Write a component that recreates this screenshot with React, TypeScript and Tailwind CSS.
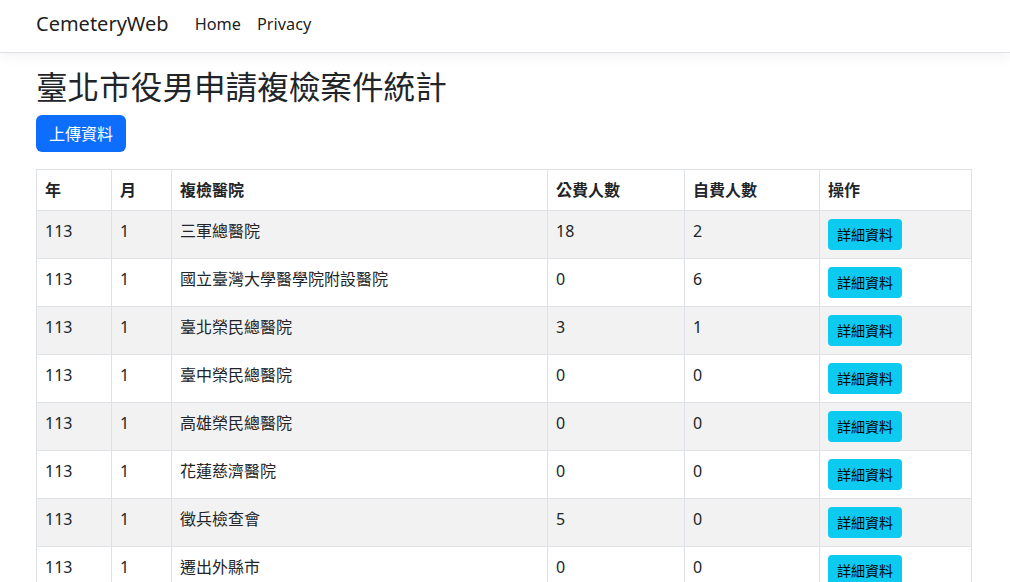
import React from 'react';

type Row = {
  year: number;
  month: number;
  hospital: string;
  publicCount: number;
  selfCount: number;
};

const rows: Row[] = [
  { year: 113, month: 1, hospital: '三軍總醫院', publicCount: 18, selfCount: 2 },
  { year: 113, month: 1, hospital: '國立臺灣大學醫學院附設醫院', publicCount: 0, selfCount: 6 },
  { year: 113, month: 1, hospital: '臺北榮民總醫院', publicCount: 3, selfCount: 1 },
  { year: 113, month: 1, hospital: '臺中榮民總醫院', publicCount: 0, selfCount: 0 },
  { year: 113, month: 1, hospital: '高雄榮民總醫院', publicCount: 0, selfCount: 0 },
  { year: 113, month: 1, hospital: '花蓮慈濟醫院', publicCount: 0, selfCount: 0 },
  { year: 113, month: 1, hospital: '徵兵檢查會', publicCount: 5, selfCount: 0 },
  { year: 113, month: 1, hospital: '遷出外縣市', publicCount: 0, selfCount: 0 },
];

const font = "font-['Segoe_UI','Noto_Sans','Noto_Sans_CJK_TC',sans-serif]";

export default function App() {
  return (
    <div className={`min-h-screen bg-white text-[#212529] ${font}`}>
      {/* Navbar */}
      <nav className="h-[53px] border-b border-[#dee2e6] bg-white shadow-[0_4px_12px_rgba(0,0,0,0.05)]">
        <div className="mx-auto flex h-full w-[960px] items-center pr-3 pl-[11px] pb-[4px]">
          <a className="mr-[18px] text-[20px] leading-[30px] text-black/90">CemeteryWeb</a>
          <a className="px-2 text-[16.3px] leading-6 text-black/90">Home</a>
          <a className="px-2 text-[16.3px] leading-6 text-black/90">Privacy</a>
        </div>
      </nav>

      {/* Content */}
      <main className="mx-auto w-[960px] pr-3 pl-[11px] pt-[15px]">
        <h2 className="mb-[9px] text-[31.6px] leading-[38px] font-normal">臺北市役男申請複檢案件統計</h2>
        <button className="h-[37px] rounded-md bg-[#0d6efd] px-[13px] text-[16px] text-white">上傳資料</button>

        <table className="mt-[17px] w-[936px] border-collapse text-[16px] leading-6">
          <thead>
            <tr>
              <th className="w-[75px] border border-[#dee2e6] p-2 text-left font-bold">年</th>
              <th className="w-[60px] border border-[#dee2e6] p-2 text-left font-bold">月</th>
              <th className="w-[376px] border border-[#dee2e6] p-2 text-left font-bold">複檢醫院</th>
              <th className="w-[137px] border border-[#dee2e6] p-2 text-left font-bold">公費人數</th>
              <th className="w-[135px] border border-[#dee2e6] p-2 text-left font-bold">自費人數</th>
              <th className="border border-[#dee2e6] p-2 text-left font-bold">操作</th>
            </tr>
          </thead>
          <tbody>
            {rows.map((r, i) => (
              <tr key={i} className={i % 2 === 0 ? 'bg-[#f2f2f2]' : 'bg-white'}>
                <td className="border border-[#dee2e6] p-2 align-top">{r.year}</td>
                <td className="border border-[#dee2e6] p-2 align-top">{r.month}</td>
                <td className="border border-[#dee2e6] p-2 align-top">{r.hospital}</td>
                <td className="border border-[#dee2e6] p-2 align-top">{r.publicCount}</td>
                <td className="border border-[#dee2e6] p-2 align-top">{r.selfCount}</td>
                <td className="border border-[#dee2e6] p-2 align-top">
                  <button className="block h-[31px] rounded bg-[#0dcaf0] px-[9px] text-[14px] leading-[21px] text-black">
                    詳細資料
                  </button>
                </td>
              </tr>
            ))}
          </tbody>
        </table>
      </main>
    </div>
  );
}
